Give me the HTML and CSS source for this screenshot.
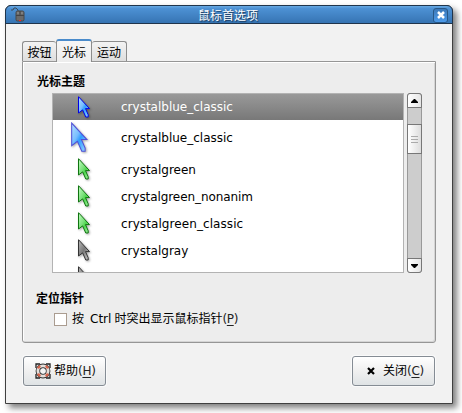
FILE: index.html
```html
<!DOCTYPE html>
<html lang="zh-CN">
<head>
<meta charset="utf-8">
<title>鼠标首选项</title>
<link rel="stylesheet" href="styles.css">
</head>
<body>
<svg width="0" height="0" class="defs">
  <defs>
    <linearGradient id="blue" x1="0" y1="0" x2="1" y2="1"><stop offset="0" stop-color="#b5e0ff"/><stop offset=".4" stop-color="#78bdff"/><stop offset=".55" stop-color="#309cff"/><stop offset="1" stop-color="#a0dcff"/></linearGradient>
    <linearGradient id="green" x1="0" y1="0" x2="1" y2="1"><stop offset="0" stop-color="#c5ffc5"/><stop offset=".45" stop-color="#78e078"/><stop offset=".6" stop-color="#4bd54b"/><stop offset="1" stop-color="#b0f5b0"/></linearGradient>
    <linearGradient id="gray" x1="0" y1="0" x2="1" y2="1"><stop offset="0" stop-color="#bbb"/><stop offset=".5" stop-color="#777"/><stop offset="1" stop-color="#d0d0d0"/></linearGradient>
    <path id="arrow" d="M.5 .7V17L4.6 13.9L7.8 21H10.2V18.8L7.5 12.6H11.5Z"/>
  </defs>
</svg>
<div class="window">
  <header class="titlebar">
    <svg class="mouse" width="15" height="16" viewBox="0 0 15 16"><path d="M1 3H3L4 1H6L8 3V5" fill="none" stroke="#3a4a58"/><rect x="6" y="4" width="8" height="10" rx="1.5" fill="#6a6a6a" stroke="#484848"/><path d="M10 4V8M6 8.5H14" stroke="#444"/><path d="M7 5H9V7H7ZM11 5H13V7H11Z" fill="#808080"/><path d="M9 13H11V14H9Z" fill="#f22"/></svg>
    <h1>鼠标首选项</h1>
    <span class="close"><svg width="8" height="8" viewBox="0 0 8 8"><path d="M1 1L7 7M7 1L1 7" stroke="#fff" stroke-width="2.5"/></svg></span>
  </header>
  <main>
    <nav class="tabs"><span class="tab">按钮</span><span class="tab active">光标</span><span class="tab">运动</span></nav>
    <section class="panel">
      <h2>光标主题</h2>
      <div class="themes">
        <div class="list">
          <div class="row selected"><span class="icon"><svg width="14" height="23" viewBox="0 0 14 23"><use href="#arrow" fill="url(#blue)" stroke="#0000e8"/></svg></span><span>crystalblue_classic</span></div>
          <div class="row tall"><span class="icon big"><svg width="18" height="32" viewBox="0 0 13 23"><use href="#arrow" fill="url(#blue)" stroke="#5050d8" stroke-width=".75"/></svg></span><span>crystalblue_classic</span></div>
          <div class="row"><span class="icon"><svg width="14" height="23" viewBox="0 0 14 23"><use href="#arrow" fill="url(#green)" stroke="#107410"/></svg></span><span>crystalgreen</span></div>
          <div class="row"><span class="icon"><svg width="14" height="23" viewBox="0 0 14 23"><use href="#arrow" fill="url(#green)" stroke="#107410"/></svg></span><span class="nonanim">crystalgreen_nonanim</span></div>
          <div class="row"><span class="icon"><svg width="14" height="23" viewBox="0 0 14 23"><use href="#arrow" fill="url(#green)" stroke="#107410"/></svg></span><span class="classic">crystalgreen_classic</span></div>
          <div class="row"><span class="icon"><svg width="14" height="23" viewBox="0 0 14 23"><use href="#arrow" fill="url(#gray)" stroke="#333"/></svg></span><span>crystalgray</span></div>
          <div class="row"><span class="icon"><svg width="14" height="23" viewBox="0 0 14 23"><use href="#arrow" fill="url(#gray)" stroke="#333"/></svg></span></div>
        </div>
        <div class="scrollbar">
          <span class="step up"><svg width="7" height="4" viewBox="0 0 7 4"><path d="M0 4V3L3 0H4L7 3V4Z"/></svg></span>
          <span class="thumb"><i></i><i></i><i></i></span>
          <span class="step down"><svg width="7" height="4" viewBox="0 0 7 4"><path d="M0 0V1L3 4H4L7 1V0Z"/></svg></span>
        </div>
      </div>
      <h2 class="locate">定位指针</h2>
      <label class="check"><span class="box"></span><span>按</span><span class="ctrl">Ctrl</span><span>时突出显示鼠标指针<span class="key">(<u>P</u>)</span></span></label>
    </section>
    <footer>
      <button class="help"><svg width="16" height="16" viewBox="0 0 16 16"><path d="M1 5V1H5M11 1H15V5M15 11V15H11M5 15H1V11" fill="none" stroke="#222" stroke-width="1.3"/><circle cx="8" cy="8" r="5" fill="none" stroke="#333" stroke-width="4.8"/><circle cx="8" cy="8" r="5.1" fill="none" stroke="#e4e0dc" stroke-width="2.8"/><path d="M3 5.4A5.6 5.6 0 0 1 5.4 3M10.6 3A5.6 5.6 0 0 1 13 5.4M13 10.6A5.6 5.6 0 0 1 10.6 13M5.4 13A5.6 5.6 0 0 1 3 10.6" fill="none" stroke="#d8654c" stroke-width="2.4"/><circle cx="8" cy="8" r="2.7" fill="#f4f4f4"/></svg><span>帮助<span class="key">(<u>H</u>)</span></span></button>
      <button class="shut"><svg width="8" height="8" viewBox="0 0 8 8"><path d="M1 1L7 7M7 1L1 7" stroke="#000" stroke-width="2.2"/></svg><span>关闭<span class="key">(<u>C</u>)</span></span></button>
    </footer>
  </main>
</div>
</body>
</html>
```
FILE: styles.css
```css
* { box-sizing: border-box; }
body { margin: 0; padding: 5px; height: 413px; overflow: hidden; background: #fff; font: 12px/16px "DejaVu Sans", "Noto Sans CJK SC", sans-serif; color: #000; }
.defs { position: absolute; }
.window { width: 448px; height: 399px; border: 1px solid #404040; border-radius: 6px 6px 0 0; background: #f2f2f2; box-shadow: 4px 4px 6px rgba(0,0,0,.5); }
.titlebar { display: flex; align-items: center; height: 19px; margin: -1px -1px 0; border: 1px solid #20354c; border-radius: 6px 6px 0 0; background: linear-gradient(#68a9e3, #4d91d4 15%, #3674b3); padding: 0 4px; }
.mouse { margin-top: 1px; }
.titlebar h1 { flex: 1; margin: 0; text-align: center; font: 12px/17px "Noto Sans CJK SC", sans-serif; color: #fff; text-shadow: 1px 1px 1px #163454; padding-right: 2px; }
.close { display: flex; align-items: center; justify-content: center; width: 15px; height: 15px; border: 1px solid #285887; border-radius: 3px; background: linear-gradient(#3c78b8, #4d9bea); margin-top: 1px; }
main { padding: 15px 16px 0; }
.tabs { display: flex; align-items: flex-end; height: 22px; }
.tab { display: flex; align-items: center; justify-content: center; width: 34px; height: 20px; border: 1px solid #8c8c8c; border-bottom: 0; border-radius: 3px 3px 0 0; background: linear-gradient(#f3f3f3, #dedede); font-family: "Noto Sans CJK SC", sans-serif; padding-top: 1px; }
.tab:first-child { border-right: 0; }
.tab:last-child { border-left: 0; width: 35px; }
.tab.active { width: 36px; height: 23px; margin-bottom: -1px; padding: 0; background: linear-gradient(#f6f6f6, #ededed); border-top: 2px solid #4a8bcb; position: relative; }
.panel { height: 282px; border: 1px solid #969696; border-radius: 0 0 3px 3px; box-shadow: inset 1px 1px #fff, inset -1px -1px #d5d5d5; background: #ededed; padding: 11px 13px 0 14px; }
h2 { margin: 0; font: bold 12px/16px "Noto Sans CJK SC", sans-serif; }
.themes { display: flex; gap: 3px; margin: 4px 0 0 15px; height: 180px; }
.list { width: 352px; border: 1px solid #b3b3b3; background: #fff; overflow: hidden; }
.row { display: flex; align-items: center; height: 27px; }
.row.tall { height: 36px; }
.row.selected { height: 26px; color: #fff; background: linear-gradient(#999, #787878); }
.nonanim { letter-spacing: -.08px; }
.classic { letter-spacing: .08px; }
.icon { width: 68px; padding-left: 25px; height: 23px; flex: none; }
.icon.big { padding-left: 18px; height: 32px; }
svg { display: block; flex: none; }
.icon svg { filter: drop-shadow(1px 1px 1px rgba(0,0,0,.35)); }
.scrollbar { width: 15px; border: 1px solid #999; border-radius: 3px; background: #cdcdcd; display: flex; flex-direction: column; }
.step { display: flex; align-items: center; justify-content: center; height: 15px; margin: -1px; border: 1px solid #777; background: linear-gradient(90deg, #fff, #e5e5e5); }
.up { border-radius: 3px 3px 0 0; }
.down { margin-top: auto; border-radius: 0 0 3px 3px; }
.thumb { height: 30px; margin: 17px -1px 0; border: 1px solid #777; background: linear-gradient(90deg, #fff, #ddd); display: flex; flex-direction: column; gap: 2px; align-items: center; justify-content: center; }
.thumb i { width: 7px; height: 1px; background: #aaa; }
.locate { margin-top: 17px; margin-left: -1px; }
.check { display: flex; align-items: center; margin: 5px 0 0 17px; height: 16px; }
.box { width: 13px; height: 13px; border: 1px solid #aa9c90; background: #fff; margin-right: 5px; }
.ctrl { margin: 0 3px 0 6px; }
.key { color: #222; letter-spacing: -.3px; }
u { text-underline-offset: 2px; }
footer { display: flex; justify-content: space-between; margin: 13px 1px 0; }
button { display: flex; align-items: center; width: 83px; height: 30px; padding: 0 0 0 11px; border: 1px solid #858c94; border-radius: 3px; background: linear-gradient(#fff, #f0f0f0 50%, #dfe3e5); font: inherit; color: #000; box-shadow: 0 0 0 1px #fafafa; }
.help { gap: 3px; }
.shut { padding-left: 14px; gap: 8px; }
```
